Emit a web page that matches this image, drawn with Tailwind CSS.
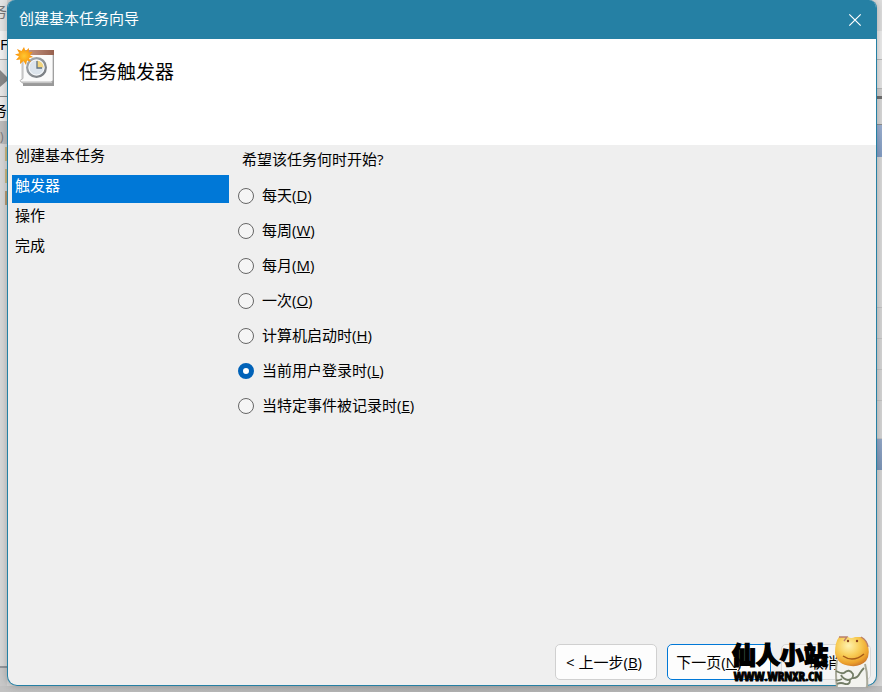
<!DOCTYPE html>
<html lang="zh-CN">
<head>
<meta charset="utf-8">
<meta name="viewport" content="width=device-width, initial-scale=1">
<title>创建基本任务向导</title>
<script src="https://cdn.jsdelivr.net/npm/@tailwindcss/browser@4"></script>
</head>
<body class="relative flex h-screen overflow-hidden bg-[#d4d4d4] pr-[5px] pb-[6px] pl-[7px] font-['Open_Sans','Noto_Sans_CJK_SC',sans-serif] text-[15px] text-black">

<!-- Window behind the dialog: left edge -->
<div class="absolute top-0 left-0 flex h-full w-[7px] flex-col overflow-hidden bg-[#d8d8d8] leading-none" aria-hidden="true">
  <div class="flex h-[31px] justify-end bg-[#e4e4e4] pt-1 text-[#777]">务</div>
  <div class="h-7 bg-[#f2f2f2] pt-[6px]">F</div>
  <div class="flex h-[37px] items-center border-t border-[#aaa] bg-[#e8e8e8]">
    <svg class="h-5 w-[7px]" viewBox="0 0 7 20"><path d="M0 2 7 9v4l-7 6z" fill="#888"/></svg>
  </div>
  <div class="flex h-[25px] justify-end border-t border-[#888] bg-[#ececec] pt-[6px]">务</div>
  <div class="h-[23px] bg-[#bcbcbc] pt-2 text-xs text-[#777]">)</div>
  <div class="flex flex-col items-end gap-2 pt-[3px]">
    <div class="h-[14px] w-[2px] bg-[#cbb981]"></div>
    <div class="h-[14px] w-[2px] bg-[#cbb981]"></div>
    <div class="h-[14px] w-[2px] bg-[#b99d74]"></div>
  </div>
  <div class="mt-auto h-[26px] border-t-2 border-[#93969b] bg-[#c8c8c8]"></div>
</div>

<!-- Window behind the dialog: right edge -->
<div class="absolute top-0 right-0 flex h-full w-5 flex-col bg-[#d6d6d6]" aria-hidden="true">
  <div class="h-[31px] bg-[#dedede]"></div>
  <div class="h-7 bg-[#ececec]"></div>
  <div class="h-[30px] border-t border-b border-[#bbb] bg-[#e6e6e6]"></div>
  <div class="h-[7px] bg-[#d0d0d0]"></div>
  <div class="h-[3px] bg-[#707070]"></div>
  <div class="h-[26px] border-b border-[#909090] bg-[#d8d8d8]"></div>
  <div class="h-8 bg-linear-to-b from-[#9db1d2] to-[#839dc3]"></div>
  <div class="h-[151px] border-b border-[#c4c4c4] bg-[#dadada]"></div>
  <div class="h-[31px] border-b border-[#c4c4c4]"></div>
  <div class="h-[31px] border-b border-[#c4c4c4]"></div>
  <div class="h-[31px] border-b border-[#c4c4c4]"></div>
  <div class="h-[38px] border-b border-[#c4c4c4]"></div>
  <div class="h-[31px] bg-linear-to-b from-[#94a8c8] to-[#7d96b8]"></div>
</div>
<div class="absolute right-0 bottom-0 left-0 h-[6px] bg-linear-to-r from-[#c2c2c2] via-[#b2b2b2] to-[#bdbdbd]" aria-hidden="true"></div>

<main class="relative flex flex-1 flex-col overflow-hidden rounded-t-lg rounded-b-[10px] border border-t-0 border-[#2580a4] bg-[#efefef] shadow-[0_0_8px_rgba(0,0,0,0.25)]">
  <header class="flex h-[39px] shrink-0 items-center justify-between bg-[#2580a4] pr-[13px] pl-[11px] text-white">
    <h1 class="pb-[3px] text-[15px] leading-5">创建基本任务向导</h1>
    <button type="button" aria-label="关闭" class="p-px">
      <svg class="size-[14px]" viewBox="0 0 14 14" fill="none" stroke="currentColor" stroke-width="1.2"><path d="m1.3 1.3 11.4 11.4M12.7 1.3 1.3 12.7"/></svg>
    </button>
  </header>

  <section class="flex h-[106px] shrink-0 items-start bg-white pt-2 pl-[7px]">
    <svg class="size-10" viewBox="0 0 40 40" aria-hidden="true">
      <defs>
        <linearGradient id="bar" x1="0" x2="1"><stop stop-color="#ca9c88"/><stop offset="1" stop-color="#96604d"/></linearGradient>
        <linearGradient id="rim" x1="0" y1="0" x2="1" y2="1"><stop stop-color="#a9adb0"/><stop offset="1" stop-color="#74797e"/></linearGradient>
        <radialGradient id="sun"><stop stop-color="#ffc832"/><stop offset="1" stop-color="#f88d05"/></radialGradient>
      </defs>
      <path d="M8 6h31v33H8z" fill="#999"/>
      <path d="M7 8h30v28H7z" fill="#f3f3f3" stroke="#aaa" stroke-width=".7"/>
      <path d="M8 4h30v29.500L36 35H6l-1-1.500 3-2z" fill="#fafafa" stroke="#aaa" stroke-width=".8"/>
      <path d="M9 3h30v5H9z" fill="url(#bar)"/>
      <circle cx="21.500" cy="20.500" r="9.300" fill="#dce4ec" stroke="url(#rim)" stroke-width="2.400"/>
      <circle cx="21.500" cy="20.500" r="7.600" fill="none" stroke="#fff" stroke-width=".8"/>
      <path d="M22 20.500V13.500a7 7 0 0 1 6.500 7z" fill="#f3d57e"/>
      <path d="M22 14v7h5" fill="none" stroke="#5f7180" stroke-width="1.300"/>
      <path d="m9 0 1.500 4.300L14 1l-.3 4.500 4-.7-2.700 3.500L18 10l-4 1 2 4-4-1.500L11 18l-2.500-4L5 17l.2-4.500L1 13l3-3.500L0 7.500l4.200-1.300L2 2l4.500 2z" fill="url(#sun)"/>
    </svg>
    <h2 class="mt-[13px] ml-6 text-[19px] leading-6">任务触发器</h2>
  </section>

  <div class="flex flex-1">
    <nav aria-label="步骤" class="w-[225px] shrink-0 pr-1 pl-1">
      <ol class="flex flex-col gap-[2px] leading-5">
        <li class="h-7 pl-[3px]">创建基本任务</li>
        <li class="h-7 bg-[#0078d7] pl-[3px] text-white" aria-current="step">触发器</li>
        <li class="h-7 pl-[3px]">操作</li>
        <li class="h-7 pl-[3px]">完成</li>
      </ol>
    </nav>

    <form class="flex flex-1 flex-col">
      <fieldset class="pl-[5px]">
        <legend class="pt-1 pl-1 leading-5">希望该任务何时开始?</legend>
        <div class="flex flex-col gap-[13px] pt-4 leading-5">
          <label class="flex h-[22px] items-center gap-2"><input type="radio" name="trigger" class="size-4 appearance-none rounded-full border border-[#666] bg-[#f5f5f5] checked:border-[5px] checked:border-[#0062b8] checked:bg-white"><span class="pb-[2px]">每天(<u>D</u>)</span></label>
          <label class="flex h-[22px] items-center gap-2"><input type="radio" name="trigger" class="size-4 appearance-none rounded-full border border-[#666] bg-[#f5f5f5] checked:border-[5px] checked:border-[#0062b8] checked:bg-white"><span class="pb-[2px]">每周(<u>W</u>)</span></label>
          <label class="flex h-[22px] items-center gap-2"><input type="radio" name="trigger" class="size-4 appearance-none rounded-full border border-[#666] bg-[#f5f5f5] checked:border-[5px] checked:border-[#0062b8] checked:bg-white"><span class="pb-[2px]">每月(<u>M</u>)</span></label>
          <label class="flex h-[22px] items-center gap-2"><input type="radio" name="trigger" class="size-4 appearance-none rounded-full border border-[#666] bg-[#f5f5f5] checked:border-[5px] checked:border-[#0062b8] checked:bg-white"><span class="pb-[2px]">一次(<u>O</u>)</span></label>
          <label class="flex h-[22px] items-center gap-2"><input type="radio" name="trigger" class="size-4 appearance-none rounded-full border border-[#666] bg-[#f5f5f5] checked:border-[5px] checked:border-[#0062b8] checked:bg-white"><span class="pb-[2px]">计算机启动时(<u>H</u>)</span></label>
          <label class="flex h-[22px] items-center gap-2"><input type="radio" name="trigger" checked class="size-4 appearance-none rounded-full border border-[#666] bg-[#f5f5f5] checked:border-[5px] checked:border-[#0062b8] checked:bg-white"><span class="pb-[2px]">当前用户登录时(<u>L</u>)</span></label>
          <label class="flex h-[22px] items-center gap-2"><input type="radio" name="trigger" class="size-4 appearance-none rounded-full border border-[#666] bg-[#f5f5f5] checked:border-[5px] checked:border-[#0062b8] checked:bg-white"><span class="pb-[2px]">当特定事件被记录时(<u>E</u>)</span></label>
        </div>
      </fieldset>
      <div class="mt-auto flex justify-end gap-[10px] pr-[5px] pb-[5px]">
        <button type="button" class="h-9 w-[102px] rounded-[5px] border border-[#d0d0d0] bg-[#fdfdfd] pr-1 whitespace-nowrap">&lt; 上一步(<u>B</u>)</button>
        <button type="submit" class="h-9 w-[104px] rounded-[5px] border border-[#0078d7] bg-[#fdfdfd] pr-2 whitespace-nowrap">下一页(<u>N</u>) &gt;</button>
        <button type="button" class="h-9 w-[90px] rounded-[5px] border border-[#d8d8d8] bg-[#f5f5f5] pr-1 whitespace-nowrap">取消</button>
      </div>
    </form>
  </div>
</main>

<!-- Site watermark -->
<div class="pointer-events-none absolute right-3 bottom-1 flex items-end gap-[6px]">
  <div class="flex flex-col items-center pb-1 font-black">
    <span class="text-2xl leading-[26px] [-webkit-text-stroke:1.5px_black]">仙人小站</span>
    <span class="pr-1 font-['Open_Sans_Condensed','Roboto_Condensed',Roboto,sans-serif] text-[13px] leading-4 [-webkit-text-stroke:1px_black]">WWW.WRNXR.CN</span>
  </div>
  <svg class="h-[52px] w-9" viewBox="0 0 36 52" aria-hidden="true">
    <defs><radialGradient id="face" cx=".4" cy=".3" r=".75"><stop stop-color="#fff2b0"/><stop offset=".45" stop-color="#f8ce58"/><stop offset=".8" stop-color="#eda22b"/><stop offset="1" stop-color="#c9742d"/></radialGradient></defs>
    <path d="M3 24Q1 38 3 51h28l3-1V24z" fill="#f3f3ef"/>
    <path d="M3 24Q1 38 3 51M31 28q3 10 2 24" fill="none" stroke="#a9a99a" stroke-width="2"/>
    <path d="M2 35q6 3 8 2 5-5 9 1 1 5-5 6-5-1-7-5M18 42q5 1 8-5 2-3 4-5M3 48q4-2 8 0 5 1 5-4M8 43q-4 2-6 1" fill="none" stroke="#737d66" stroke-width="1.800"/>
    <path d="M5 1h9q3 2 7 0h6q4 1 6 6 4 11-1 18-6 6-15 5Q3 29 1 17 1 6 5 1z" fill="url(#face)"/>
    <path d="M5 1h8l-3 4M27 1q6 3 7 10" fill="none" stroke="#ba806c" stroke-width="1.300"/>
    <circle cx="14" cy="5" r="1.200" fill="#8c431d"/><circle cx="23" cy="5" r="1.200" fill="#8c431d"/>
    <path d="M9 20q10 7 21-2" fill="none" stroke="#a65c18" stroke-width="1.500"/>
  </svg>
</div>
</body>
</html>
